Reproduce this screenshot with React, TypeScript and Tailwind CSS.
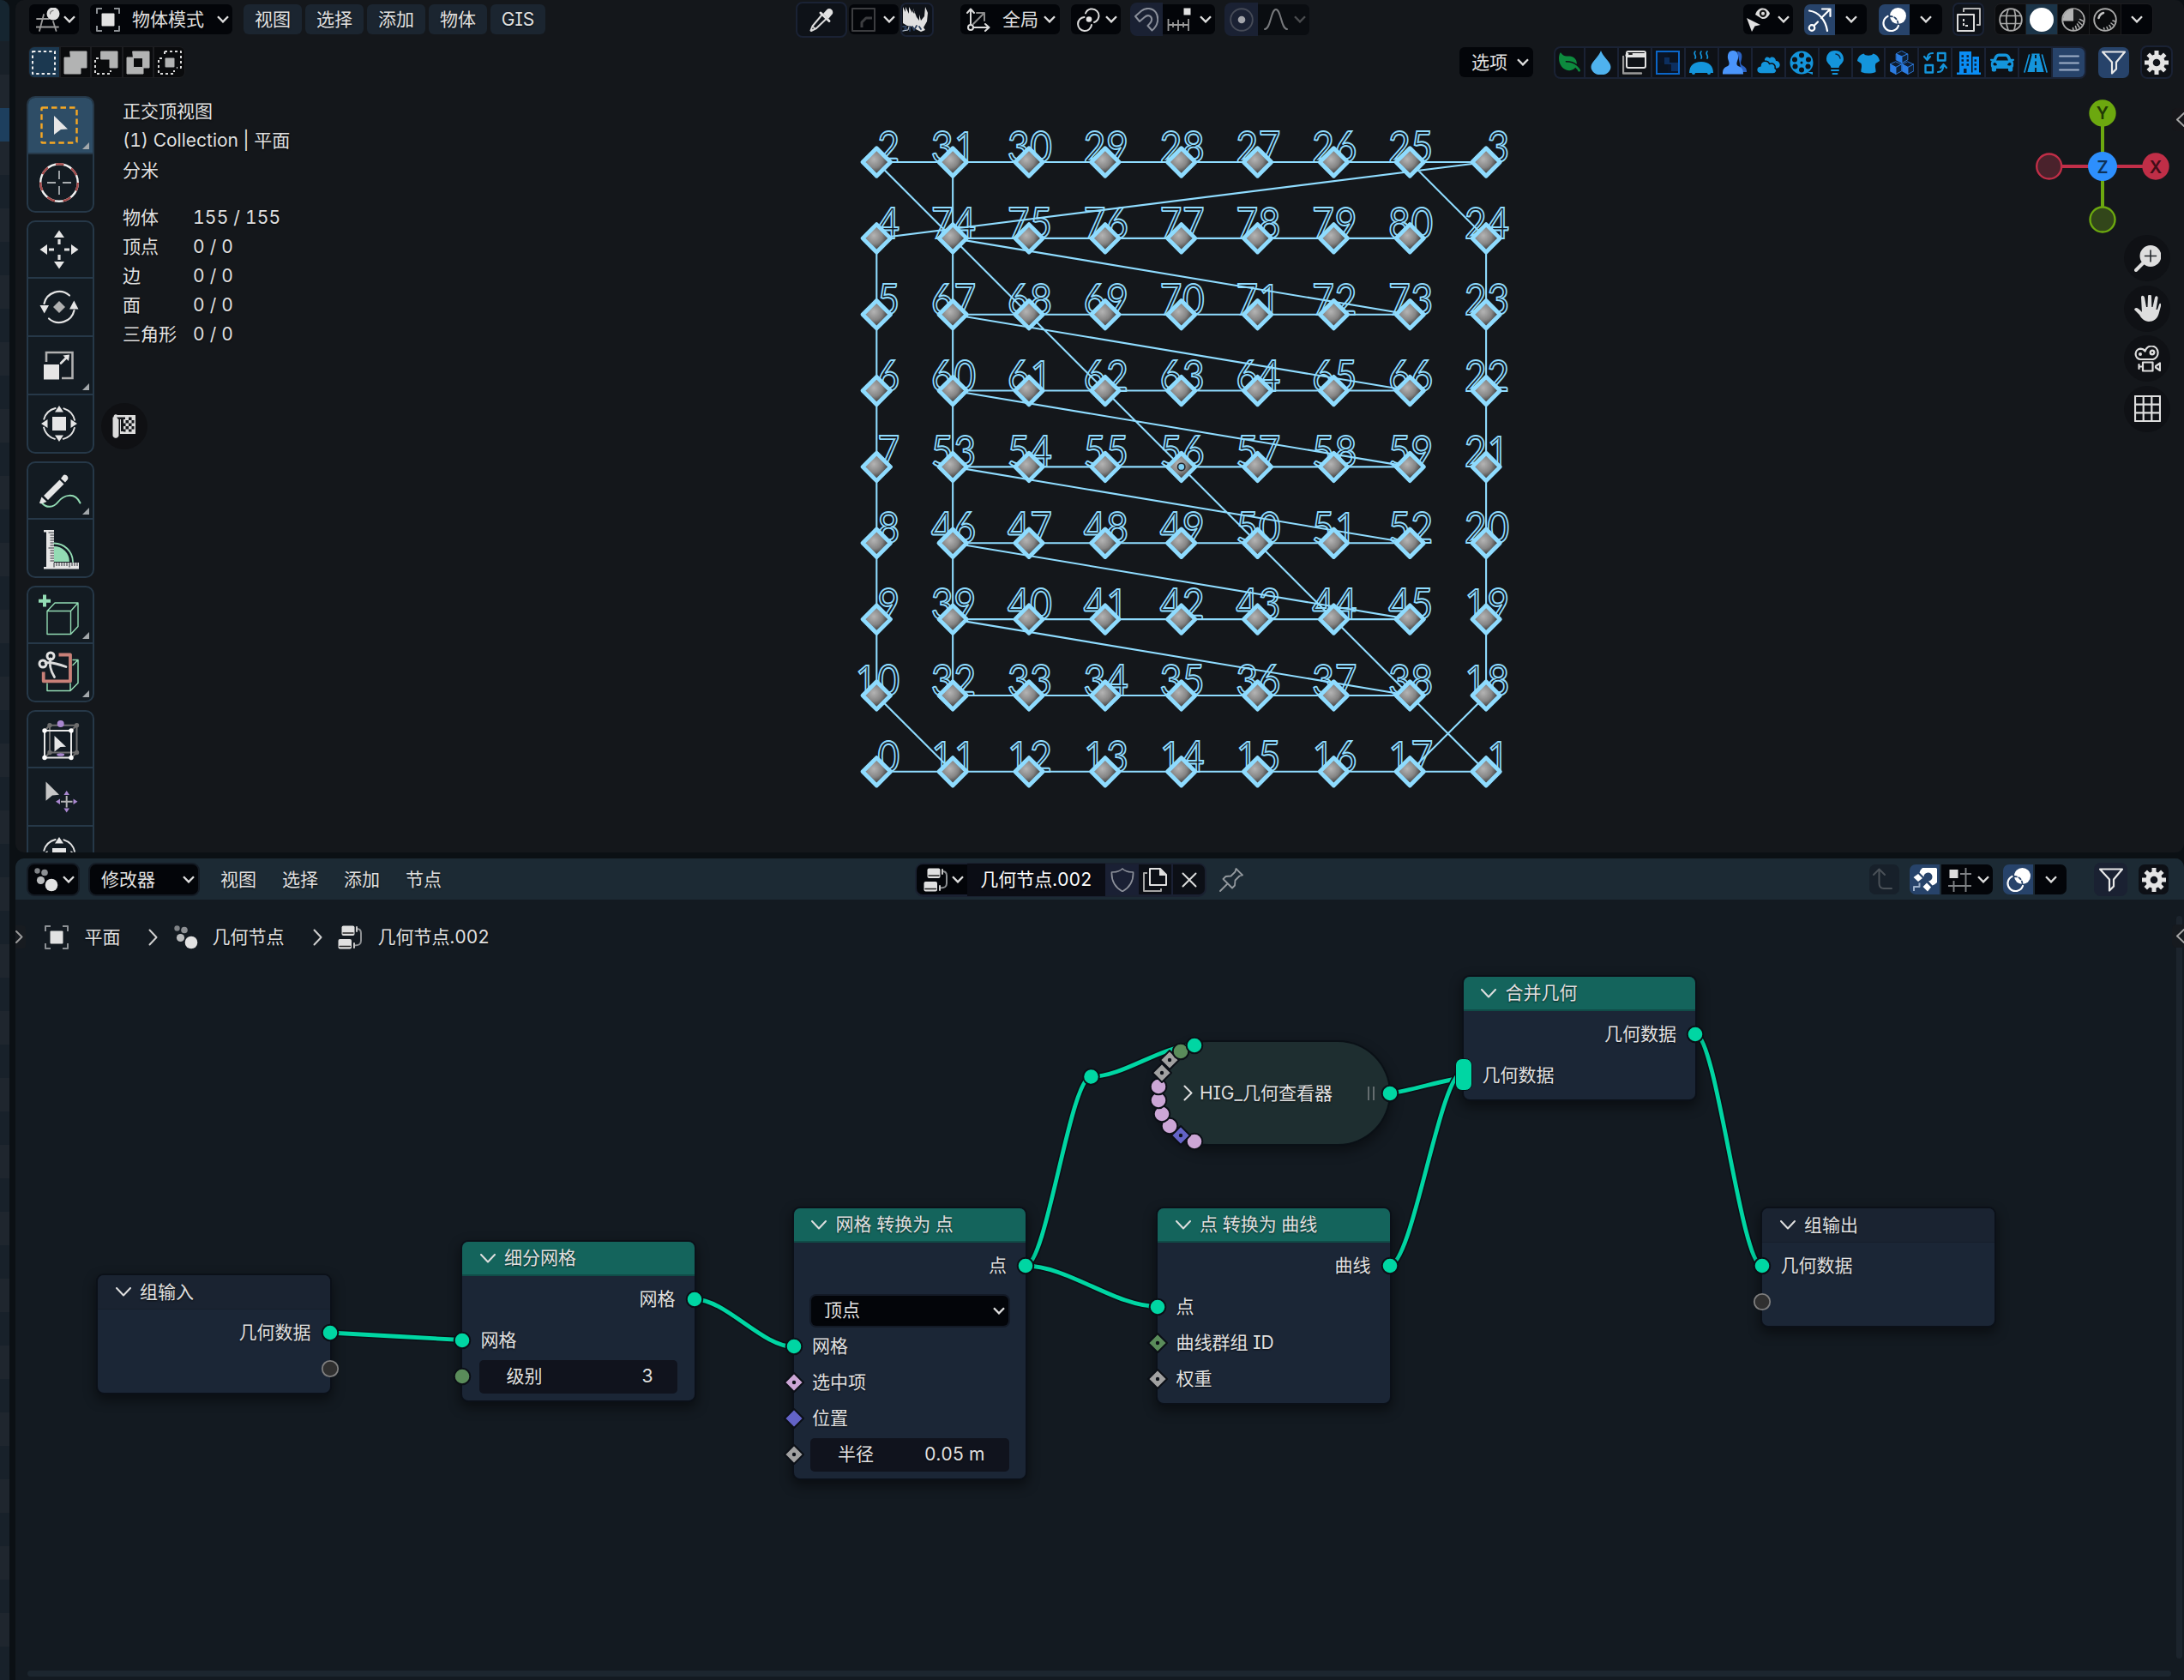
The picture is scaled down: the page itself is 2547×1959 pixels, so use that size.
import React from "react";
import { FaLeaf, FaCar } from "react-icons/fa";

type Kids = { children?: React.ReactNode; className?: string };

/* ---------- shared pieces ---------- */

function Ico({ children, className = "size-[28px]", box = "0 0 28 28" }: Kids & { box?: string }) {
  return (
    <svg viewBox={box} className={`shrink-0 ${className}`} fill="none" strokeLinecap="round" strokeLinejoin="round">
      {children}
    </svg>
  );
}

function Chevron({ className = "" }: { className?: string }) {
  return (
    <svg viewBox="0 0 14 9" className={`h-[9px] w-[14px] shrink-0 ${className}`} fill="none">
      <path d="M1 1.2 L7 7.4 L13 1.2" stroke="#dedede" strokeWidth="2.3" />
    </svg>
  );
}

function Dark({ children, className = "" }: Kids) {
  return <div className={`flex h-[35px] shrink-0 items-center bg-[#030509] ${className}`}>{children}</div>;
}

/* ---------- header icons ---------- */

const GridBall = () => (
  <Ico>
    <path d="M9 8 L4 27 M20 16 L23.500 27 M1 13 H15 M0 22.500 H26" stroke="#9b9b9b" strokeWidth="1.8" />
    <circle cx="20" cy="7" r="7.500" fill="#e0e0e0" />
    <path d="M16.500 7 A4 4 0 0 1 20 3.300" stroke="#777" strokeWidth="1.3" />
  </Ico>
);

const ObjectMode = () => (
  <Ico>
    <path d="M1 7 V1 H7 M21 1 H27 V7 M27 21 V27 H21 M7 27 H1 V21" stroke="#8b8f93" strokeWidth="2" strokeLinecap="butt" />
    <rect x="6.500" y="6.500" width="15" height="15" rx="1" fill="#e2e2e2" />
  </Ico>
);

const Eyedropper = () => (
  <Ico>
    <path d="M14 9 L3.500 21.500 L1.500 26.500 M19 13.500 L8 24 L2 27" stroke="#dcdcdc" strokeWidth="2" />
    <path d="M4 22 L6.500 24.500" stroke="#dcdcdc" strokeWidth="1.5" />
    <path d="M16 7 L20.500 2 C23 -0.500 28.500 2 27 7 L22 13 Z" fill="#e2e2e2" />
    <path d="M13 6 L23 15.500" stroke="#e2e2e2" strokeWidth="3" />
  </Ico>
);

const BevelBox = () => (
  <Ico>
    <rect x="1" y="1" width="26" height="26" stroke="#3c3d40" strokeWidth="2" />
    <path d="M12 23 V17 L17 12 H24" stroke="#3c3d40" strokeWidth="3" strokeLinecap="butt" />
  </Ico>
);

const Sketch = () => (
  <Ico className="h-[31px] w-[31px]" box="0 0 31 31">
    <path d="M1 1 L4 7 L4 1 L8 9 L8 1 L12 8 L13 3 L17 13 L20 17 L20 10 L22 17 L26 12 L27 1 L30 8 L29 18 L25 25 L27 28 L22 30 L16 27 L12 24 L6 23 L1 20 Z" fill="#e0e0e0" />
    <path d="M12 2 L14 8 M23 9 L25 3" stroke="#0e1218" strokeWidth="1.200" />
    <path d="M1 24 H5 L3 27 H6 L1 29 M9 29 V24 M12 24 L14 28 L17 23 M20 24 L22 27" stroke="#2b3f5c" strokeWidth="1.800" />
    <path d="M1 29 L7 28 L8 24" stroke="#c0c8d0" strokeWidth="1" />
  </Ico>
);

const Axes = () => (
  <Ico>
    <path d="M5 20 V2 M1 6 L5 1.500 L9 6" stroke="#dcdcdc" strokeWidth="2" />
    <path d="M8 23 H26 M22 19 L26.500 23 L22 27" stroke="#dcdcdc" strokeWidth="2" />
    <circle cx="5" cy="23" r="3" stroke="#dcdcdc" strokeWidth="2" />
    <path d="M8 19 L20 7 M12 6 H21 V15" stroke="#8b8b8b" strokeWidth="2" />
  </Ico>
);

const PivotLinks = () => (
  <Ico>
    <path d="M10 6.500 A8 8 0 1 1 20 17 M17 20 A8 8 0 1 1 8.500 11" stroke="#dcdcdc" strokeWidth="2" />
    <circle cx="14" cy="13.500" r="3.300" fill="#e6e6e6" />
  </Ico>
);

const MagnetLine = () => (
  <Ico>
    <path
      d="M1 10 L8 3.800 C13 -0.500 21 0 25 5.500 C29 12 27.500 21 20.500 26.500 L15.500 21 C20 17 21.500 13.500 19 10.500 C16.500 8 14 9 11.500 11.200 L6 16 Z"
      stroke="#8a8f9a"
      strokeWidth="2"
    />
  </Ico>
);

const SnapIncrement = () => (
  <Ico>
    <path d="M1.500 13 V27 M13 14 V27 M25 13 V27 M1.500 20 H25 M7 17 V23 M19 17 V23" stroke="#9a9a9a" strokeWidth="1.800" strokeLinecap="butt" />
    <rect x="19.500" y="0.500" width="8" height="8" fill="#e2e2e2" />
  </Ico>
);

const EyeCursor = () => (
  <Ico>
    <path d="M11 8 C13 2 17 0.500 19.500 0.500 C24 0.500 27 4 28 7 C26 11 23 13.500 19 13 Z" fill="#dedede" />
    <circle cx="20" cy="6.800" r="4.200" fill="#111" />
    <circle cx="20" cy="6.800" r="2" fill="#dedede" />
    <path d="M1 12 L17 20 L10.500 21.500 L7 28 Z" fill="#e2e2e2" />
  </Ico>
);

const GizmoArrow = () => (
  <Ico>
    <path d="M2 3.500 C13 5 21 14 23 27" stroke="#fff" strokeWidth="2.200" />
    <circle cx="5" cy="23.500" r="3.300" stroke="#fff" strokeWidth="2.200" />
    <path d="M7.500 21 L12 16.500 M16 12 L26 2 M17 1.500 H26.500 V10" stroke="#fff" strokeWidth="2.200" />
  </Ico>
);

const Overlays = () => (
  <Ico>
    <circle cx="18.500" cy="9.500" r="9.500" fill="#fff" />
    <path d="M6.500 10 A9 9 0 1 0 19 21" stroke="#fff" strokeWidth="2.200" />
    <path d="M9 10 A9 9 0 0 1 18.500 18.500" stroke="#27436a" strokeWidth="1.800" strokeDasharray="3 2.500" />
  </Ico>
);

const XRay = () => (
  <Ico>
    <rect x="1" y="8" width="19" height="19" stroke="#dcdcdc" strokeWidth="2" />
    <path d="M8 5 V1 H27 V20 H23" stroke="#b5b5b5" strokeWidth="2" strokeLinecap="butt" />
    <path d="M8 13 V21 H14" stroke="#dcdcdc" strokeWidth="2" strokeDasharray="3 2" strokeLinecap="butt" />
  </Ico>
);

const Wire = () => (
  <Ico>
    <circle cx="14" cy="14" r="12.800" stroke="#a8a8a8" strokeWidth="1.900" />
    <path d="M2 9.500 H26 M2 18.500 H26 M11 2 C8 9 8 19 11 26 M18 2 C20 9 20 19 18 26" stroke="#a8a8a8" strokeWidth="1.700" />
  </Ico>
);

const Material = () => (
  <Ico>
    <circle cx="14" cy="14" r="12.800" stroke="#a8a8a8" strokeWidth="1.900" />
    <path d="M14 15.500 H2 A12.500 12.500 0 0 1 14 1.500 Z" fill="#b4b4b4" />
    <path d="M14 1.500 C20 2 24 6 25 10 L20 15 L14 15.500 Z" fill="#1a1b1d" />
    <path d="M14 26 L13.500 23.500 M17.500 25 L16.500 21.500 M21 23 L18.500 19 M24 20 L20 16.500 M26 16 L21.500 13.500" stroke="#a8a8a8" strokeWidth="1.600" />
  </Ico>
);

const Rendered = () => (
  <Ico>
    <circle cx="14" cy="14" r="12.800" stroke="#a8a8a8" strokeWidth="1.900" />
    <path d="M6.500 12 A8.500 8.500 0 0 1 12 6" stroke="#c5c5c5" strokeWidth="2.600" />
    <path d="M13 25 L12.500 23.500 M17 25 L16 22.500 M20.500 23 L19 20.500 M23.500 20 L21 18 M25.500 16 L23 15" stroke="#a8a8a8" strokeWidth="1.600" />
  </Ico>
);

const Funnel = () => (
  <Ico>
    <path d="M1 1.500 H27 L17 13.500 V21.500 L12 26.500 V13.500 Z" stroke="#e8e8e8" strokeWidth="2.200" />
  </Ico>
);

const Gear = () => (
  <Ico>
    <g stroke="#e4e4e4" strokeWidth="5" strokeLinecap="butt">
      <path d="M14 0 V28 M0 14 H28 M4.200 4.200 L23.800 23.800 M23.800 4.200 L4.200 23.800" />
    </g>
    <circle cx="14" cy="14" r="9.800" fill="#e4e4e4" />
    <circle cx="14" cy="14" r="4.300" fill="#10131a" />
  </Ico>
);

const Dots = () => (
  <Ico>
    <circle cx="3.500" cy="3.500" r="3.200" fill="#7f8286" />
    <circle cx="12" cy="5.500" r="3.800" fill="#8c8f93" />
    <circle cx="7.500" cy="14.500" r="4.600" fill="#b9bbbd" />
    <circle cx="20" cy="20" r="7.300" fill="#e2e2e2" />
  </Ico>
);

const NodeTree = () => (
  <Ico>
    <rect x="4.500" y="0.500" width="15" height="11.500" rx="2" fill="#e0e0e0" />
    <path d="M6 9 H18" stroke="#222" strokeWidth="1.400" />
    <rect x="0.500" y="16" width="15.500" height="11.500" rx="2" fill="#e0e0e0" />
    <path d="M2 24.500 H14.500" stroke="#222" strokeWidth="1.400" />
    <path d="M22 4 C26 4 27 6 27 9 V18 C27 22 25 23.500 19 23.500" stroke="#8d9093" strokeWidth="2" />
    <path d="M22 2 V7 M19 21 V26" stroke="#c8c8c8" strokeWidth="2" />
  </Ico>
);

const SelectNew = () => (
  <Ico>
    <rect x="1" y="1" width="26" height="26" stroke="#f0f0f0" strokeWidth="2" strokeDasharray="3.400 3" strokeLinecap="butt" />
  </Ico>
);
const SelectExtend = () => (
  <Ico>
    <path d="M8 1 H27 V20 H20 V27 H1 V8 H8 Z" fill="#b2b3b3" stroke="#b2b3b3" />
  </Ico>
);
const SelectSubtract = () => (
  <Ico>
    <path d="M8 1 H27 V20 H18 V10 H8 Z" fill="#b2b3b3" stroke="#b2b3b3" />
    <path d="M5 9 H1 V27 H19 V23" stroke="#d8d8d8" strokeWidth="2" strokeDasharray="3 3" strokeLinecap="butt" />
  </Ico>
);
const SelectInvert = () => (
  <Ico>
    <path fillRule="evenodd" d="M8 1 H27 V20 H20 V27 H1 V8 H8 Z M8.500 9 V19.500 H19.500 V9 Z" fill="#b2b3b3" stroke="#b2b3b3" />
  </Ico>
);
const SelectIntersect = () => (
  <Ico>
    <path d="M8 1 H27 V20 H22 M8 1 V5 M5 9 H1 V27 H19 V23" stroke="#d8d8d8" strokeWidth="2" strokeDasharray="3 3" strokeLinecap="butt" />
    <rect x="8.500" y="8.500" width="11" height="11" rx="1" fill="#b2b3b3" />
  </Ico>
);

/* ---------- category strip ---------- */

const B = "#1495dc";

const categories: React.ReactNode[] = [
  <FaLeaf key="leaf" className="size-[25px] -scale-x-100 text-[#0d8a3e]" />,
  <Ico key="drop">
    <path d="M14 0 C16 7 25.500 13 25.500 19 A11 9 0 0 1 2.500 19 C2.500 13 12 7 14 0 Z" fill="#4fb2ee" />
  </Ico>,
  <Ico key="window">
    <rect x="5" y="1" width="22" height="19" rx="2" stroke="#e2e2e2" strokeWidth="2" />
    <path d="M6 5.500 H26" stroke="#e2e2e2" strokeWidth="5" />
    <path d="M8 4 H11" stroke="#222" strokeWidth="2" />
    <path d="M1 7 V26.500 H22" stroke="#9a9a9a" strokeWidth="2.400" />
  </Ico>,
  <Ico key="checker">
    <rect x="1" y="1" width="26" height="26" fill="#0a1426" stroke="#0b66c8" strokeWidth="2" strokeLinejoin="miter" />
    <path d="M2 14 H14 V26 H2 Z M14 2 H26 V14 H14 Z" fill="#0a1320" />
    <path d="M2 8 H10 V16 H18 V24 H26 V14 H16 V8 Z" fill="#0c2f60" />
  </Ico>,
  <Ico key="heat">
    <path d="M7 1 C4 4 9 6 7 9 M14 1 C11 4 16 6 14 9 M21 1 C18 4 23 6 21 9" stroke={B} strokeWidth="1.700" />
    <path d="M0 26 C0 18 5 13 14 13 C23 13 28 18 28 26 Z" fill={B} />
    <circle cx="5" cy="26" r="2" fill={B} />
    <circle cx="23" cy="26" r="2" fill={B} />
  </Ico>,
  <Ico key="users">
    <path d="M17 1 C22 1 23 5 22 10 C21 14 20 16 24 18 C28 20 28 23 28 25 H22" fill="#2a62c4" />
    <path d="M12 0 C17 0 18.500 4 18 9 C17 13 15 16 18 18 C23 20 24 22 24 27.500 H0 C0 22 1 20 6 18 C9 16 7 13 6 9 C5.500 4 7 0 12 0 Z" fill="#4a95fb" />
  </Ico>,
  <Ico key="clouds">
    <path d="M10 10 C12 6 15 8 16 9 C18 6 23 8 23 12 C28 12 29 18 26 20 L20 22 L10 16 Z" fill={B} />
    <path d="M6 27 C-1 27 -1 18 5 18 C5 11 14 10.500 15.500 15.500 C20 13.500 23 17.500 22 20.500 C26 23 23 27 20 27 Z" fill={B} stroke="#0e1116" strokeWidth="1.500" />
  </Ico>,
  <Ico key="reel">
    <circle cx="14" cy="14" r="13.500" fill={B} />
    <path d="M20 25 L27 28 V25 H22" fill={B} />
    <g fill="#0e1116">
      <circle cx="14" cy="5.500" r="3" />
      <circle cx="14" cy="22.500" r="3" />
      <circle cx="6" cy="10.500" r="3" />
      <circle cx="22" cy="10.500" r="3" />
      <circle cx="6.500" cy="18.500" r="3" />
      <circle cx="21.500" cy="18.500" r="3" />
      <circle cx="14" cy="14" r="1.500" />
    </g>
  </Ico>,
  <Ico key="bulb">
    <path d="M14 0 C21 0 24 5 24 10 C24 15 19 16 18.500 20 H9.500 C9 16 4 15 4 10 C4 5 7 0 14 0 Z" fill={B} />
    <path d="M10 23 H18 M11.500 27 H16.500" stroke={B} strokeWidth="2" />
    <path d="M15 4 C18 4.500 19.500 6 20 9" stroke="#0e2a44" strokeWidth="1.500" />
  </Ico>,
  <Ico key="shirt">
    <path d="M8.500 3.500 C10 6.500 18 6.500 19.500 3.500 C23 4.500 26 6.500 27 12 L22.500 15 C21 19 23 21 22.500 25 C17 27 11 27 5.500 25 C5 21 7 19 5.500 15 L1 12 C2 6.500 5 4.500 8.500 3.500 Z" fill={B} />
  </Ico>,
  <Ico key="cubes">
    <g stroke="#2f7fe4" strokeWidth="0.900">
      <path d="M14 0.500 L20.500 4 L14 7 L7.500 4 Z" fill="#0e1c30" />
      <path d="M7.500 4 L14 7 V14.500 L7.500 11 Z" fill="#2b7ce2" />
      <path d="M20.500 4 L14 7 V14.500 L20.500 11 Z" fill="#0e2036" />
      <path d="M7 13 L13.500 16 L7 19.500 L0.500 16 Z" fill="#0e1c30" />
      <path d="M0.500 16 L7 19.500 V27.500 L0.500 24 Z" fill="#2b7ce2" />
      <path d="M13.500 16 L7 19.500 V27.500 L13.500 24 Z" fill="#0e2036" />
      <path d="M21 13 L27.500 16 L21 19.500 L14.500 16 Z" fill="#0e1c30" />
      <path d="M14.500 16 L21 19.500 V27.500 L14.500 24 Z" fill="#2b7ce2" />
      <path d="M27.500 16 L21 19.500 V27.500 L27.500 24 Z" fill="#0e2036" />
    </g>
  </Ico>,
  <Ico key="swap">
    <rect x="17" y="3" width="8.500" height="8.500" stroke={B} strokeWidth="2.400" />
    <rect x="2.500" y="17" width="8.500" height="8.500" stroke={B} strokeWidth="2.400" />
    <path d="M11 3 C6 3 5 5 4.500 10 M1 7 L4.500 11 L8 7 M17 25 C22 25 23 22 23.500 17 M20 20 L23.500 16 L27 20" stroke={B} strokeWidth="2.200" />
  </Ico>,
  <Ico key="building">
    <path d="M3 1 H17 V27 H3 Z M18.500 7 H26 V27 H18.500 Z M0 25.500 H28 V28 H0 Z" fill="#0a8df5" />
    <path d="M5.500 6.500 H14.500 M5.500 11.500 H14.500 M5.500 16.500 H14.500 M20.500 11.500 H24 M20.500 16.500 H24 M20.500 21.500 H24" stroke="#0e1c30" strokeWidth="2.600" strokeDasharray="2.500 3.500" strokeLinecap="butt" />
    <path d="M8 26 V21 H11.500 V26" fill="#0e1c30" />
  </Ico>,
  <FaCar key="car" className="size-[28px] text-[#1495dc]" />,
  <Ico key="road">
    <path d="M9.500 3.500 H18.500 L24 25 H4 Z" fill={B} />
    <path d="M14 5 V9 M14 12.500 V17 M14 20 V25" stroke="#0e1116" strokeWidth="1.800" strokeLinecap="butt" />
    <path d="M6.500 5 L1 25 M21.500 5 L27 25" stroke={B} strokeWidth="1.700" />
    <path d="M9 5 L3.500 25.500 M19 5 L24.500 25.500" stroke="#0e1116" strokeWidth="1.200" />
  </Ico>,
  <Ico key="menu">
    <path d="M3 6.500 H25 M3 14.500 H25 M3 22.500 H25" stroke="#9fb0c8" strokeWidth="1.900" />
  </Ico>,
];

/* ---------- toolbar ---------- */

const cursorFill = "#e6e6e6";

const TransformGlyph = () => (
  <>
    <circle cx="24" cy="24" r="18.500" stroke="#e2e2e2" strokeWidth="1.900" strokeDasharray="19 10.060" strokeDashoffset="-5" />
    <path d="M24 3 L29 10.500 H19 Z M24 45 L29 37.500 H19 Z M3 24 L10.500 19 V29 Z M45 24 L37.500 19 V29 Z" fill={cursorFill} />
    <rect x="16" y="16" width="16" height="16" fill={cursorFill} />
  </>
);

const tools: { icon: React.ReactNode; more?: boolean; on?: boolean }[][] = [
  [
    {
      on: true,
      more: true,
      icon: (
        <>
          <rect x="3.500" y="3.500" width="41" height="41" rx="1" stroke="#f7a823" strokeWidth="2.400" strokeDasharray="6.500 4" strokeLinecap="butt" />
          <path d="M18 13 L34 28.500 L26 29 L18 35 Z" fill={cursorFill} />
        </>
      ),
    },
    {
      icon: (
        <>
          <circle cx="24" cy="24" r="21.800" stroke="#f2f2f2" strokeWidth="2.400" />
          <circle cx="24" cy="24" r="21.800" stroke="#a34848" strokeWidth="2.400" strokeDasharray="9.785 9.785" strokeLinecap="butt" />
          <path d="M24 10 V20 M24 28 V38 M10 24 H20 M28 24 H38" stroke="#a9adb0" strokeWidth="1.800" strokeLinecap="butt" />
        </>
      ),
    },
  ],
  [
    {
      icon: (
        <>
          <path d="M24 1.500 L30 10 H18 Z M24 46.500 L30 38 H18 Z M1.500 24 L10 18 V30 Z M46.500 24 L38 18 V30 Z" fill={cursorFill} />
          <path d="M24 12 V18 M24 30 V36 M12 24 H18 M30 24 H36" stroke="#e0e0e0" strokeWidth="3.200" strokeLinecap="butt" />
        </>
      ),
    },
    {
      icon: (
        <>
          <path d="M6.500 20 A18 18 0 0 1 36 10.500 M41.500 28 A18 18 0 0 1 12 37.500" stroke="#e2e2e2" strokeWidth="2.200" />
          <path d="M1.500 22 H12 L6.700 31.500 Z M36 26.500 H46.500 L41.300 16.500 Z" fill={cursorFill} />
          <path d="M24 17 L31 24 L24 31 L17 24 Z" fill="#b0b0b0" />
        </>
      ),
    },
    {
      more: true,
      icon: (
        <>
          <path d="M9 20 V9 H39.500 V39 H27" stroke="#b0b0b0" strokeWidth="2.600" strokeLinecap="butt" strokeLinejoin="miter" />
          <rect x="6" y="23" width="18" height="17.500" fill={cursorFill} />
          <path d="M26 21.500 L33 14.500" stroke="#e2e2e2" strokeWidth="2.600" />
          <path d="M28.500 12.500 L36 11.500 L35 19 Z" fill={cursorFill} />
        </>
      ),
    },
    { icon: <TransformGlyph /> },
  ],
  [
    {
      more: true,
      icon: (
        <>
          <path d="M4 38.500 C9 44.500 17 44.500 23 37 C29 29.500 42 25 48.500 38.500" stroke="#93dcb4" strokeWidth="2" />
          <path d="M6 30 L24.500 11.500 L29.500 16.500 L11 35 Z M26 10 L29 6 C31 4 36 8 34 11 L31 14.500 Z M1 38.500 L3.500 31.500 L9.500 37 C6 38 2.500 40.500 1 38.500 Z" fill={cursorFill} />
        </>
      ),
    },
    {
      icon: (
        <>
          <path d="M6 3 H18 V41 H47 V48.500 H6 V46 H9 V5.500 H6 Z" fill={cursorFill} />
          <path d="M11.500 6 H18 M13.500 9 H18 M13.500 12 H18 M13.500 15 H18 M13.500 18 H18 M13.500 21 H18 M11.500 24 H18 M13.500 27 H18 M13.500 30 H18 M13.500 33 H18 M13.500 36 H18 M13.500 39 H18 M18 41 V46.500 M21 41 V45 M24 41 V45 M27 41 V45 M30 41 V45 M33 41 V45 M36 41 V46.500 M39 41 V45 M42 41 V45 M45 41 V45" stroke="#2a2f34" strokeWidth="1" strokeLinecap="butt" />
          <path d="M18 40 V22 A18 18 0 0 1 36 40 Z" fill="#93dcb4" />
          <path d="M18 18.500 A22 22 0 0 1 40 40" stroke="#93dcb4" strokeWidth="1.800" />
        </>
      ),
    },
  ],
  [
    {
      more: true,
      icon: (
        <>
          <path d="M7 0.500 V14.500 M0 7.700 H14" stroke="#93dcb4" strokeWidth="4" strokeLinecap="butt" />
          <path d="M10 19.500 H37.500 V46.500 H10 Z L19 10 H46 V37.500 L37.500 46.500 M37.500 19.500 L46 10" stroke="#93dcb4" strokeWidth="1.400" />
        </>
      ),
    },
    {
      more: true,
      icon: (
        <>
          <path d="M10 37 V45.500 H37 V37 M37 45.500 L46 36.500 V9.500 H40 M46 9.500 L40 15.500" stroke="#93dcb4" strokeWidth="1.500" />
          <path d="M23.500 3.500 H37 V34.300 H5.700 V23.500" stroke="#c98078" strokeWidth="3.800" strokeLinecap="butt" />
          <circle cx="14" cy="5" r="4" stroke="#e2e2e2" strokeWidth="3" />
          <circle cx="5" cy="14" r="4" stroke="#e2e2e2" strokeWidth="3" />
          <path d="M8 13 C14 12 20 13 32 17.500 M14 8 C12 15 14 22 18.500 29.500" stroke="#dcdcdc" strokeWidth="2.800" />
        </>
      ),
    },
  ],
  [
    {
      icon: (
        <>
          <path d="M13 7.700 H44.500 V39.500 H13 Z M7 14 L13 7.700 M38 14 L44.500 7.700 M38 45.500 L44.500 39.500 M7 45.500 L13 39.500" stroke="#6e6e6e" strokeWidth="2" />
          <g fill="#6e6e6e">
            <circle cx="13" cy="7.700" r="2.700" />
            <circle cx="44.500" cy="7.700" r="2.700" />
            <circle cx="44.500" cy="39.500" r="2.700" />
            <circle cx="13" cy="39.500" r="2.700" />
          </g>
          <ellipse cx="25.700" cy="42" rx="4.500" ry="1.800" fill="#a987cf" />
          <rect x="7" y="14" width="31" height="31.500" stroke="#e6e6e6" strokeWidth="2" />
          <g fill="#fff">
            <circle cx="7" cy="14" r="2.700" />
            <circle cx="38" cy="14" r="2.700" />
            <circle cx="38" cy="45.500" r="2.700" />
            <circle cx="7" cy="45.500" r="2.700" />
          </g>
          <circle cx="25.700" cy="6" r="4" fill="#a987cf" />
          <path d="M18.500 20 L32 32.700 L25.500 33 L18.500 38.500 Z" fill={cursorFill} />
        </>
      ),
    },
    {
      icon: (
        <>
          <path d="M8.500 6.500 L24 21.700 L16 22.500 L8.500 28.700 Z" fill="#c6c6c6" />
          <path d="M32.700 23 V36.500 M26 29.700 H39.500" stroke="#b4b4b4" strokeWidth="2" strokeLinecap="butt" />
          <path d="M32.700 17 L36 22 H29.400 Z M32.700 42.500 L36 37.500 H29.400 Z M20 29.700 L25 26.400 V33 Z M45.500 29.700 L40.500 26.400 V33 Z" fill="#a987cf" />
        </>
      ),
    },
    { icon: <TransformGlyph /> },
  ],
];

function Toolbar() {
  return (
    <div className="ml-[13px] flex w-[79px] flex-col gap-[9px] pt-[17px]">
      {tools.map((group, gi) => (
        <div
          key={gi}
          className="shrink-0 divide-y-2 divide-[#263848] overflow-hidden rounded-[10px] border-2 border-[#263848] bg-[#131b22]"
        >
          {group.map((t, i) => {
            const last = i === group.length - 1;
            return (
              <div
                key={i}
                className={`relative flex items-center justify-center pr-[3px] ${last ? "h-[66px]" : i === 0 ? "h-[66px]" : "h-[68px]"} ${t.on ? "bg-[#2e4d66]" : ""}`}
              >
                <Ico box="0 0 48 48" className="size-[48px] overflow-visible">
                  {t.icon}
                </Ico>
                {t.more && (
                  <svg viewBox="0 0 8 8" className="absolute right-[4px] bottom-[4px] size-[8px]">
                    <path d="M8 0 V8 H0 Z" fill="#a3a8ab" />
                  </svg>
                )}
              </div>
            );
          })}
        </div>
      ))}
    </div>
  );
}

/* ---------- 3D viewport scene ---------- */

const CELL = 88.85;
const spot = (c: number, r: number): [number, number] => [1022.3 + c * CELL, 189 + r * CELL];

const points: [number, number][] = [
  spot(0, 8),
  spot(8, 8),
  spot(0, 0),
  spot(8, 0),
  ...Array.from({ length: 7 }, (_, i) => spot(0, i + 1)),
  ...Array.from({ length: 7 }, (_, i) => spot(i + 1, 8)),
  ...Array.from({ length: 7 }, (_, i) => spot(8, 7 - i)),
  ...Array.from({ length: 7 }, (_, i) => spot(7 - i, 0)),
  ...Array.from({ length: 49 }, (_, i) => spot((i % 7) + 1, 7 - Math.floor(i / 7))),
];

function Digits({ n }: { n: number }) {
  const s = String(n);
  const xs = s.length === 2 ? [-14, 16] : [16];
  return (
    <>
      {s.split("").map((d, i) => (
        <tspan key={i} x={xs[i]} fontFamily={d === "1" ? '"Open Sans", sans-serif' : "Lato, sans-serif"}>
          {d}
        </tspan>
      ))}
    </>
  );
}

function Scene() {
  return (
    <svg viewBox="18 0 2529 994" className="pointer-events-none absolute inset-0 h-[994px] w-[2529px]" fill="none">
      <defs>
        <radialGradient id="ball" cx="0.4" cy="0.4" r="0.55">
          <stop offset="0" stopColor="#b4b4b4" />
          <stop offset="0.55" stopColor="#858585" />
          <stop offset="1" stopColor="#333" />
        </radialGradient>
      </defs>
      <g stroke="#8fdcff" strokeWidth="1.900" fontSize="50" textAnchor="middle" className="[text-shadow:none]">
        {points.map(([x, y], i) => (
          <text key={i} transform={`translate(${x} ${y}) scale(0.88 1)`}>
            <Digits n={i} />
          </text>
        ))}
      </g>
      <polyline points={points.map((p) => p.join(",")).join(" ")} stroke="#8fdcff" strokeWidth="2.100" />
      {points.map(([x, y], i) => (
        <path
          key={i}
          transform={`translate(${x} ${y})`}
          d="M0 -16.200 L16.200 0 L0 16.200 L-16.200 0 Z"
          fill="url(#ball)"
          stroke="#8fdcff"
          strokeWidth="4.800"
          strokeLinejoin="round"
        />
      ))}
      <circle cx={points[56][0]} cy={points[56][1]} r="4.200" fill="#7fd0f5" stroke="#20252b" strokeWidth="1.600" />
    </svg>
  );
}

function AxisGizmo() {
  return (
    <svg viewBox="0 0 160 160" className="absolute top-[114px] left-[2354px] size-[160px]" strokeWidth="4">
      <path d="M80 18 V130" stroke="#6ca80f" />
      <path d="M33 80 H127" stroke="#c22f49" />
      <circle cx="80" cy="18" r="15.700" fill="#6ca80f" />
      <circle cx="142" cy="80" r="15.700" fill="#c02e47" />
      <circle cx="17.700" cy="80" r="14.500" fill="#4a222c" stroke="#c02e47" strokeWidth="2.400" />
      <circle cx="80" cy="142" r="14.500" fill="#32461a" stroke="#6ca80f" strokeWidth="2.400" />
      <circle cx="80" cy="80" r="17" fill="#2d8ffd" />
      <g className="font-['Inter',sans-serif] text-[20px] font-semibold [text-shadow:none]" textAnchor="middle" stroke="none">
        <text x="80" y="25" fill="#213a05">Y</text>
        <text x="142" y="87.500" fill="#420d17">X</text>
        <text x="80" y="87.500" fill="#0e3157">Z</text>
      </g>
    </svg>
  );
}

const RoundButton = ({ children }: Kids) => (
  <div className="flex size-[54px] items-center justify-center rounded-full bg-[#0f1115]">
    <Ico className="size-[31px]" box="0 0 31 31">
      {children}
    </Ico>
  </div>
);

function NavButtons() {
  return (
    <div className="absolute top-[274px] left-[2459px] flex flex-col gap-[4.500px]">
      <RoundButton>
        <path d="M2 29 L11 20" stroke="#dedede" strokeWidth="4" />
        <circle cx="19" cy="12.500" r="12.500" fill="#dedede" />
        <path d="M19 6 V19 M12.500 12.500 H25.500" stroke="#22262b" strokeWidth="1.600" />
      </RoundButton>
      <RoundButton>
        <path d="M17 31 C12 31 8 27 6 23 L0 17 C1 14 4 14 9 20 V21 L8 3 C8 0 11 0 12 3 L14 14 L15.500 14 L16 1.500 C16 -1 20 -1 20 1.500 L20.300 14 L21.500 14 L24 3 C25 0 28 1 27.500 4 L25.500 17 L27 17 L29 11 C30 8.500 32 10 31 13 L28.500 22 C27 28 22 31 17 31 Z" fill="#dedede" />
      </RoundButton>
      <RoundButton>
        <circle cx="7" cy="10" r="2" fill="#dedede" />
        <path d="M7 3.700 C10 3.700 11.500 5 12.500 6.500 C15 0 20 0.500 21 0.500 A8 8 0 0 1 22 16 H7 A6.200 6.200 0 0 1 7 3.700 Z" stroke="#dedede" strokeWidth="2.200" />
        <circle cx="21" cy="8" r="2.300" stroke="#dedede" strokeWidth="2.400" />
        <path d="M10 19.500 H21.500 V29.500 H10 Z M5.500 22 V27 M5.500 24.500 H9 M30 20.500 V29 L25 25.500 V24 Z" stroke="#dedede" strokeWidth="2.200" />
      </RoundButton>
      <RoundButton>
        <path d="M1 1 H30 V30 H1 Z M10.700 1 V30 M20.300 1 V30 M1 10.700 H30 M1 20.300 H30" stroke="#dedede" strokeWidth="2.200" />
      </RoundButton>
    </div>
  );
}

const stats = [
  ["物体", "155 / 155"],
  ["顶点", "0 / 0"],
  ["边", "0 / 0"],
  ["面", "0 / 0"],
  ["三角形", "0 / 0"],
];

function ViewportHeader() {
  return (
    <>
      <div className="flex h-[45px] items-center">
        <Dark className="ml-[16px] w-[58px] justify-between rounded-[6px] pr-[4px] pl-[8px]">
          <GridBall />
          <Chevron />
        </Dark>
        <Dark className="ml-[13px] w-[166px] rounded-[6px] pr-[4px] pl-[7px]">
          <ObjectMode />
          <span className="ml-[14px]">物体模式</span>
          <Chevron className="ml-auto" />
        </Dark>
        <div className="ml-[13px] flex gap-[4px]">
          {["视图", "选择", "添加", "物体"].map((m) => (
            <div key={m} className="flex h-[35px] w-[68px] items-center justify-center rounded-[6px] bg-[#1b2530]">
              {m}
            </div>
          ))}
          <div className="flex h-[35px] w-[64px] items-center justify-center rounded-[6px] bg-[#1b2530]">GIS</div>
        </div>

        <div className="ml-[292px] flex h-[42px] w-[60px] items-center justify-center rounded-[8px] border-2 border-[#1a2234] bg-[#0e1218]">
          <Eyedropper />
        </div>
        <Dark className="ml-[2px] w-[58px] justify-between rounded-[6px] pr-[4px] pl-[3px]">
          <BevelBox />
          <Chevron />
        </Dark>
        <div className="ml-[2px] flex h-[40px] w-[39px] items-center rounded-[7px] border-2 border-[#1a2234] bg-[#0e1218]">
          <Sketch />
        </div>
        <Dark className="ml-[31px] w-[116px] rounded-[6px] pr-[5px] pl-[7px]">
          <Axes />
          <span className="ml-[14px]">全局</span>
          <Chevron className="ml-auto" />
        </Dark>
        <Dark className="ml-[13px] w-[58px] justify-between rounded-[6px] pr-[4px] pl-[7px]">
          <PivotLinks />
          <Chevron />
        </Dark>
        <div className="ml-[11px] flex h-[39px] w-[38px] items-center justify-center rounded-l-[8px] bg-[#1a2133]">
          <MagnetLine />
        </div>
        <Dark className="w-[61px] justify-between rounded-r-[6px] pr-[4px] pl-[5px]">
          <SnapIncrement />
          <Chevron />
        </Dark>
        <div className="ml-[11px] flex h-[39px] w-[39px] items-center justify-center rounded-l-[8px] bg-[#1a2133]">
          <Ico>
            <circle cx="14" cy="14" r="12.800" stroke="#464b57" strokeWidth="1.900" />
            <circle cx="14" cy="14" r="4.300" fill="#a3a5ab" />
          </Ico>
        </div>
        <div className="flex h-[36px] w-[60px] items-center justify-between rounded-r-[6px] bg-[#0a0d11] pr-[4px] pl-[7px]">
          <Ico>
            <path d="M1 25 C8 25 8 2 14 2 C20 2 20 25 27 25" stroke="#77797c" strokeWidth="2" />
          </Ico>
          <Chevron className="opacity-30" />
        </div>

        <Dark className="ml-[506px] w-[58px] justify-between rounded-[6px] pr-[4px] pl-[3px]">
          <EyeCursor />
          <Chevron />
        </Dark>
        <div className="ml-[13px] flex h-[36px] w-[36px] items-center justify-center rounded-l-[7px] bg-[#27436a]">
          <GizmoArrow />
        </div>
        <Dark className="w-[37px] justify-center rounded-r-[6px]">
          <Chevron />
        </Dark>
        <div className="ml-[14px] flex h-[36px] w-[36px] items-center justify-center rounded-l-[7px] bg-[#27436a]">
          <Overlays />
        </div>
        <Dark className="w-[38px] justify-center rounded-r-[6px]">
          <Chevron />
        </Dark>
        <div className="ml-[12px] flex h-[39px] w-[37px] items-center justify-center rounded-[7px] border-2 border-[#1a2234] bg-[#0e1218]">
          <XRay />
        </div>
        <div className="ml-[12px] flex h-[37px] w-[185px] items-center gap-px overflow-hidden rounded-[7px] border border-[#1c1d20] bg-[#1c1d20]">
          <div className="flex h-full w-[35px] items-center justify-center bg-[#0a0b0d]"><Wire /></div>
          <div className="flex h-full w-[36px] items-center justify-center bg-[#1b3448]">
            <div className="size-[28px] rounded-full bg-white" />
          </div>
          <div className="flex h-full w-[36px] items-center justify-center bg-[#0a0b0d]"><Material /></div>
          <div className="flex h-full w-[36px] items-center justify-center bg-[#0a0b0d]"><Rendered /></div>
          <div className="flex h-full flex-1 items-center justify-center bg-[#030509]"><Chevron /></div>
        </div>
      </div>

      <div className="mt-[5px] flex h-[45px] items-center">
        <div className="ml-[15px] flex h-[37px] w-[183px] gap-[2px] overflow-hidden rounded-[7px] border border-[#1c1d20] bg-[#1c1d20]">
          {[SelectNew, SelectExtend, SelectSubtract, SelectInvert, SelectIntersect].map((I, i) => (
            <div key={i} className={`flex flex-1 items-center justify-center ${i === 0 ? "bg-[#1b3850]" : "bg-[#0a0b0d]"}`}>
              <I />
            </div>
          ))}
        </div>
        <Dark className="ml-[1486px] w-[86px] justify-between rounded-[6px] pr-[5px] pl-[14px]">
          <span>选项</span>
          <Chevron />
        </Dark>
        <div className="ml-[24px] flex h-[38px] w-[621px] gap-[2px] overflow-hidden rounded-[8px] border-2 border-[#1a2234] bg-[#1a2234]">
          {categories.map((c, i) => (
            <div
              key={i}
              className={`flex items-center justify-center ${i === 0 ? "w-[33px] shrink-0" : "flex-1"} ${i === 15 ? "bg-[#27436a]" : "bg-[#0e1116]"}`}
            >
              {c}
            </div>
          ))}
        </div>
        <div className="ml-[14px] flex h-[36px] w-[36px] items-center justify-center rounded-[7px] bg-[#27436a]">
          <Funnel />
        </div>
        <div className="ml-[13px] flex h-[39px] w-[38px] items-center justify-center rounded-[8px] border-2 border-[#1a2234] bg-[#0e1116]">
          <Gear />
        </div>
      </div>
    </>
  );
}

function Viewport() {
  return (
    <section className="relative h-[994px] overflow-hidden rounded-[10px] bg-[#14171b]">
      <ViewportHeader />
      <div className="flex h-[899px] overflow-hidden">
        <Toolbar />
        <div className="ml-[33px] pt-[17.500px]">
          <div className="flex h-[34.500px] items-center">正交顶视图</div>
          <div className="flex h-[34.500px] items-center whitespace-pre">(1) Collection | 平面</div>
          <div className="flex h-[34.500px] items-center">分米</div>
          <div className="mt-[20.500px] grid grid-cols-[82px_auto]">
            {stats.map(([k, v]) => (
              <React.Fragment key={k}>
                <div className="flex h-[34.200px] items-center">{k}</div>
                <div className="flex h-[34.200px] items-center tracking-[0.200px]">{v}</div>
              </React.Fragment>
            ))}
          </div>
        </div>
      </div>
      <Scene />
      <div className="absolute top-[470px] left-[100px] flex size-[54px] items-center justify-center rounded-full bg-[#0f1013]">
        <Ico>
          <path d="M4 1 H27 V23 H9 V6 H4 Z" fill="#dcdcdc" />
          <path d="M2 2 C2 0 7 0 7 4 V25 C7 28 1 28 1 25 V4" fill="#dcdcdc" stroke="#dcdcdc" />
          <path d="M5 3.500 H15 V6 H13 V20 H10 V6 H7" fill="#15171b" />
          <g fill="#15171b">
            <path d="M19 3.500 h3.500 v3.500 h-3.500 z M15.500 7 h3.500 v3.500 h-3.500 z M22.500 7 h3 v3.500 h-3 z M19 10.500 h3.500 v3.500 h-3.500 z M15.500 14 h3.500 v3.500 h-3.500 z M22.500 14 h3 v3.500 h-3 z M19 17.500 h3.500 v3 h-3.500 z M13 10.500 h2.500 v3.500 h-2.500 z M13 17.500 h2.500 v3 h-2.500 z" />
          </g>
        </Ico>
      </div>
      <div className="absolute top-[126px] right-0 flex h-[27px] w-[14px] items-center justify-end rounded-l-[5px] bg-[#16161a]">
        <Ico className="h-[17px] w-[10px]" box="0 0 10 17">
          <path d="M10 1 L2 8.500 L10 16" stroke="#a5a5a5" strokeWidth="2" />
        </Ico>
      </div>
      <AxisGizmo />
      <NavButtons />
    </section>
  );
}

/* ---------- node editor ---------- */

type Shape = "geo" | "int" | "virtual" | "bool" | "grayD" | "pinkD" | "vecD" | "vecDot" | "intD";

function Socket({ kind, className = "" }: { kind: Shape; className?: string }) {
  const circle: Record<string, string> = { geo: "#00d6a3", int: "#5a8c5a", bool: "#cca6d6" };
  const diamond: Record<string, string> = { grayD: "#a1a1a1", pinkD: "#cca6d6", vecD: "#6363c7", vecDot: "#6363c7", intD: "#5a8c5a" };
  return (
    <svg viewBox="-13 -13 26 26" className={`absolute size-[26px] ${className}`}>
      {circle[kind] && <circle r="9.300" fill={circle[kind]} stroke="#0b0f16" strokeWidth="2" />}
      {kind === "virtual" && <circle r="9.200" fill="#303030" stroke="#7e7e7e" strokeWidth="1.800" />}
      {diamond[kind] && (
        <>
          <path d="M0 -11 L11 0 L0 11 L-11 0 Z" fill={diamond[kind]} stroke="#0b0f16" strokeWidth="2" strokeLinejoin="round" />
          {kind !== "vecD" && <circle r="2.200" fill="#0b0f16" />}
        </>
      )}
    </svg>
  );
}

const DownArrow = () => (
  <Ico className="h-[11px] w-[18px]" box="0 0 18 11">
    <path d="M1 1 L9 9.500 L17 1" stroke="#dedede" strokeWidth="2" />
  </Ico>
);

function Node({ title, teal, className, children }: { title: string; teal?: boolean; className: string; children: React.ReactNode }) {
  return (
    <div className={`absolute w-[270.500px] rounded-[7px] bg-[#1b2636] shadow-[0_0_0_2px_#0b1018,0_6px_14px_3px_rgba(0,0,0,0.45)] ${className}`}>
      <div
        className={`flex h-[40px] items-center rounded-t-[7px] pl-[20.500px] ${teal ? "border-b-2 border-[#104c48] bg-[#14645c]" : "border-b border-[#161f2b] bg-[#1a2331]"}`}
      >
        <DownArrow />
        <span className="ml-[10.500px]">{title}</span>
      </div>
      <div className="pt-[6px] pb-[7px]">{children}</div>
    </div>
  );
}

function Out({ label, kind = "geo" }: { label?: string; kind?: Shape }) {
  return (
    <div className="relative flex h-[42px] items-center justify-end pr-[22px]">
      {label}
      <Socket kind={kind} className="top-[8px] right-[-13px]" />
    </div>
  );
}

function In({ label, kind = "geo", className = "" }: { label?: string; kind?: Shape; className?: string }) {
  return (
    <div className={`relative flex h-[42px] items-center pl-[21.500px] ${className}`}>
      {label}
      <Socket kind={kind} className="top-[8px] left-[-13px]" />
    </div>
  );
}

function Field({ label, value, kind }: { label: string; value: string; kind: Shape }) {
  return (
    <div className="relative flex h-[42px] items-center px-[19.500px]">
      <div className="flex h-[39px] w-full items-center justify-between rounded-[5px] bg-[#10131d] pr-[28px] pl-[32px]">
        <span>{label}</span>
        <span>{value}</span>
      </div>
      <Socket kind={kind} className="top-[8px] left-[-13px]" />
    </div>
  );
}

function link(x0: number, y0: number, x1: number, y1: number) {
  const dx = Math.abs(x1 - x0);
  const h = 0.32 * dx * Math.min(1, (Math.abs(y1 - y0) / dx) * 3.25);
  return `M${x0} ${y0} C${x0 + h} ${y0} ${x1 - h} ${y1} ${x1} ${y1}`;
}

const links = [
  link(384.5, 1554, 539, 1562.5),
  link(809.5, 1515, 926, 1570.5),
  link(1196, 1476, 1272.5, 1255.5),
  link(1196, 1476, 1350, 1523.5),
  link(1272.5, 1255.5, 1392.5, 1219),
  link(1620, 1274.5, 1707, 1257),
  link(1620, 1476, 1707, 1249),
  link(1977, 1206, 2055, 1476),
];

const pillSockets: [number, number, Shape][] = [
  [1392.6, 1218.8, "geo"],
  [1376.6, 1225.7, "int"],
  [1363.5, 1236.4, "grayD"],
  [1355.3, 1250.5, "grayD"],
  [1351, 1266.7, "bool"],
  [1351, 1283.2, "bool"],
  [1355.3, 1299.4, "bool"],
  [1363.5, 1313.2, "bool"],
  [1376.6, 1324.2, "vecDot"],
  [1392.6, 1330.7, "bool"],
];

function Canvas() {
  return (
    <div className="absolute top-[-1049px] left-[-18px] h-[1959px] w-[2547px]">
      <svg viewBox="0 0 2547 1959" className="absolute inset-0 size-full" fill="none">
        {links.map((d) => (
          <g key={d}>
            <path d={d} stroke="#0b1016" strokeWidth="8" />
            <path d={d} stroke="#00d6a3" strokeWidth="4.800" />
          </g>
        ))}
        <circle cx="1272.500" cy="1255.500" r="9.300" fill="#00d6a3" stroke="#0b0f16" strokeWidth="2" />
      </svg>

      <Node title="组输入" className="top-[1487px] left-[114px]">
        <Out label="几何数据" />
        <Out kind="virtual" />
      </Node>

      <Node title="细分网格" teal className="top-[1448px] left-[539px]">
        <Out label="网格" />
        <In label="网格" className="mt-[6px]" />
        <Field label="级别" value="3" kind="int" />
      </Node>

      <Node title="网格 转换为 点" teal className="top-[1409px] left-[925.500px]">
        <Out label="点" />
        <div className="mt-[10px] flex h-[42px] items-center px-[20.500px]">
          <div className="flex h-[35px] w-full items-center justify-between rounded-[6px] bg-[#030509] pr-[4px] pl-[15px] shadow-[0_0_0_2px_#131a26]">
            <span>顶点</span>
            <Chevron />
          </div>
        </div>
        <In label="网格" />
        <In label="选中项" kind="pinkD" />
        <In label="位置" kind="vecD" />
        <Field label="半径" value="0.05 m" kind="grayD" />
      </Node>

      <Node title="点 转换为 曲线" teal className="top-[1409px] left-[1350px]">
        <Out label="曲线" />
        <In label="点" className="mt-[6px]" />
        <In label="曲线群组 ID" kind="intD" />
        <In label="权重" kind="grayD" />
      </Node>

      <Node title="合并几何" teal className="top-[1139px] left-[1706.500px]">
        <Out label="几何数据" />
        <div className="relative mt-[6px] flex h-[42px] items-center pl-[22px]">
          几何数据
          <div className="absolute top-[1px] left-[-9.500px] h-[38px] w-[20px] rounded-[8px] border border-[#0b0f16] bg-[#00d6a3]" />
        </div>
      </Node>

      <Node title="组输出" className="top-[1409px] left-[2055px]">
        <In label="几何数据" />
        <In kind="virtual" />
      </Node>

      <div className="absolute top-[1215px] left-[1350px] flex h-[119px] w-[270px] items-center rounded-full bg-[#1e2e30] pr-[17px] pl-[30px] shadow-[0_0_0_2px_#0a1016,0_6px_14px_3px_rgba(0,0,0,0.4)]">
        <Ico className="h-[19px] w-[11px]" box="0 0 11 19">
          <path d="M1.500 1.500 L9.500 9.500 L1.500 17.500" stroke="#dedede" strokeWidth="2" />
        </Ico>
        <span className="ml-[8px]">HIG_几何查看器</span>
        <div className="ml-auto h-[16px] w-[8px] border-x-[2.500px] border-[#646d6f]" />
      </div>
      {[...pillSockets].reverse().map(([x, y, k]) => (
        <div key={`${x}-${y}`} className="absolute" style={{ left: x - 13, top: y - 13 }}>
          <Socket kind={k} />
        </div>
      ))}
      <Socket kind="geo" className="top-[1261.500px] left-[1607.500px]" />
    </div>
  );
}

function Crumbs() {
  const sep = (
    <Ico className="h-[20px] w-[11px]" box="0 0 11 20">
      <path d="M1.500 1.500 L9.500 10 L1.500 18.500" stroke="#cfcfcf" strokeWidth="2" />
    </Ico>
  );
  return (
    <div className="flex h-[87px] items-center">
      <div className="flex h-[27px] w-[12px] items-center rounded-r-[4px] bg-[#171b20]">
        <Ico className="h-[17px] w-[9px]" box="0 0 9 17">
          <path d="M1 2 L7.500 8.500 L1 15" stroke="#9a9a9a" strokeWidth="2" />
        </Ico>
      </div>
      <div className="ml-[22px]"><ObjectMode /></div>
      <span className="ml-[18.500px] w-[42px]">平面</span>
      <div className="ml-[32px]">{sep}</div>
      <div className="ml-[19px]"><Dots /></div>
      <span className="ml-[17px] w-[84px]">几何节点</span>
      <div className="ml-[33px]">{sep}</div>
      <div className="ml-[18px]"><NodeTree /></div>
      <span className="ml-[19px]">几何节点.002</span>
    </div>
  );
}

function NodeHeader() {
  return (
    <div className="flex h-[48px] items-center bg-[#1c2a34] pt-px">
      <Dark className="ml-[15px] w-[58px] justify-between rounded-[7px] pr-[4px] pl-[7px] shadow-[0_0_0_2px_#141b24]">
        <Dots />
        <Chevron />
      </Dark>
      <Dark className="ml-[14px] w-[126px] justify-between rounded-[7px] pr-[4px] pl-[13px] shadow-[0_0_0_2px_#141b24]">
        <span>修改器</span>
        <Chevron />
      </Dark>
      <div className="ml-[26px] flex gap-[30px]">
        {["视图", "选择", "添加", "节点"].map((m) => (
          <span key={m}>{m}</span>
        ))}
      </div>

      <div className="ml-[554px] flex h-[36px] w-[336px] items-center rounded-[8px] bg-[#1a2034] shadow-[0_0_0_2px_#1a2130]">
        <Dark className="w-[59px] justify-between rounded-l-[7px] pr-[4px] pl-[8px]">
          <NodeTree />
          <Chevron />
        </Dark>
        <div className="flex h-[38px] w-[161px] items-center justify-center bg-[#0b0d15] text-white">几何节点.002</div>
        <div className="flex h-full w-[39px] items-center justify-center">
          <Ico>
            <path d="M14 1 C17 4 22 5 26.500 5 C27 16 22 23 14 27.500 C6 23 1 16 1.500 5 C6 5 11 4 14 1 Z" stroke="#8c909a" strokeWidth="1.700" />
          </Ico>
        </div>
        <div className="flex h-[35px] w-[38px] items-center justify-center bg-[#0c0f16]">
          <Ico>
            <path d="M8 1 H20 L27 8 V20 H8 Z" stroke="#e0e0e0" strokeWidth="2" />
            <path d="M19 1 V9 H27 Z" fill="#e0e0e0" />
            <path d="M5 6 H1 V27 H21 V24" stroke="#a5a5a5" strokeWidth="2" strokeLinecap="butt" />
          </Ico>
        </div>
        <div className="ml-[2px] flex h-[35px] w-[37px] items-center justify-center rounded-r-[7px] bg-[#0c0f16]">
          <Ico>
            <path d="M6.500 6.500 L21.500 21.500 M21.500 6.500 L6.500 21.500" stroke="#dcdcdc" strokeWidth="2" />
          </Ico>
        </div>
      </div>
      <div className="ml-[17px]">
        <Ico>
          <path d="M1 27 L9.500 18.500 M19.500 1 L27 8.500 L23.500 9.500 L18.500 14.500 L18 20.500 L15 23.500 L4.500 13 L7.500 10 L13.500 9.500 L18.500 4.500 Z" stroke="#949a9f" strokeWidth="1.800" />
        </Ico>
      </div>

      <div className="ml-[730px] flex size-[35px] items-center justify-center rounded-[7px] bg-[#17202a]">
        <Ico>
          <path d="M1 8 L7.500 1.500 L14 8 M7.500 2 V18 C7.500 22 9 24 13 24 H22" stroke="#4a5158" strokeWidth="2" />
        </Ico>
      </div>
      <div className="ml-[12px] flex size-[35px] items-center justify-center rounded-l-[7px] bg-[#27436a]">
        <Ico>
          <path d="M7.500 5.500 A12 12 0 1 1 22.500 20.500 L18 15.500 A5 5 0 1 0 12.500 10.500 Z" fill="#fff" />
          <path d="M6 7 L11 12 L6 16 L0.500 11 Z M16 17.500 L21 22.500 L17 27.500 L11.500 22 Z" fill="#fff" />
          <path d="M1 27 V22 H7.500 V17.500" stroke="#9db0ca" strokeWidth="2" strokeLinecap="butt" />
        </Ico>
      </div>
      <Dark className="ml-[2px] w-[60px] justify-between rounded-r-[7px] pr-[4px] pl-[8px]">
        <Ico>
          <path d="M0 21 H27 M6.500 15 V28 M20.500 0 V28 M14 7 H27" stroke="#7f8285" strokeWidth="1.900" strokeLinecap="butt" />
          <rect x="1.500" y="2" width="10" height="10" fill="#dcdcdc" />
        </Ico>
        <Chevron />
      </Dark>
      <div className="ml-[12px] flex size-[35px] items-center justify-center rounded-l-[7px] bg-[#27436a]">
        <Overlays />
      </div>
      <Dark className="ml-[2px] w-[37px] justify-center rounded-r-[7px]">
        <Chevron />
      </Dark>
      <div className="ml-[32px] flex h-[39px] w-[39px] items-center justify-center rounded-[8px] bg-[#1a2132]">
        <Funnel />
      </div>
      <div className="ml-[13px] flex size-[35px] items-center justify-center rounded-[7px] bg-[#0d1016]">
        <Gear />
      </div>
    </div>
  );
}

function NodeEditor() {
  return (
    <section className="relative mt-[7px] h-[958px] overflow-hidden rounded-t-[10px] bg-[#131a21]">
      <NodeHeader />
      <div className="relative h-[910px]">
        <Crumbs />
        <Canvas />
        <div className="absolute top-[19px] right-[2px] h-[866px] w-[7px] rounded-full bg-[#1c242d]" />
        <div className="absolute top-[29px] right-0 flex h-[27px] w-[14px] items-center justify-end rounded-l-[5px] bg-[#161a1f]">
          <Ico className="h-[17px] w-[10px]" box="0 0 10 17">
            <path d="M10 1 L2 8.500 L10 16" stroke="#a5a5a5" strokeWidth="2" />
          </Ico>
        </div>
        <div className="absolute bottom-[4px] left-[14px] h-[7px] w-[2500px] rounded-full bg-[#1c262f]" />
      </div>
    </section>
  );
}

function OutlinerEdge() {
  return (
    <div className="h-full w-[11px] shrink-0 overflow-hidden rounded-tr-[10px] bg-[#192129]">
      <div className="h-[48px] bg-[#152530]" />
      <div className="h-[39px] bg-[#182028]" />
      <div className="h-[39px] bg-[#1f262e]" />
      <div className="h-[39px] bg-[#1d3f5e]" />
      {Array.from({ length: 46 }, (_, i) => (
        <div key={i} className={`h-[39px] ${i % 2 === 0 ? "bg-[#1f262e]" : "bg-[#18212a]"}`} />
      ))}
    </div>
  );
}

export default function App() {
  return (
    <main className="flex h-[1959px] w-[2547px] overflow-hidden bg-[#0b1014] font-['Inter','Noto_Sans_CJK_SC',sans-serif] text-[21px] leading-[30px] whitespace-nowrap text-[#e0e0e0] [font-feature-settings:'tnum','cv08'] [text-shadow:0_1px_2px_rgba(0,0,0,0.7)]">
      <OutlinerEdge />
      <div className="ml-[7px] flex w-[2529px] flex-col">
        <Viewport />
        <NodeEditor />
      </div>
    </main>
  );
}
